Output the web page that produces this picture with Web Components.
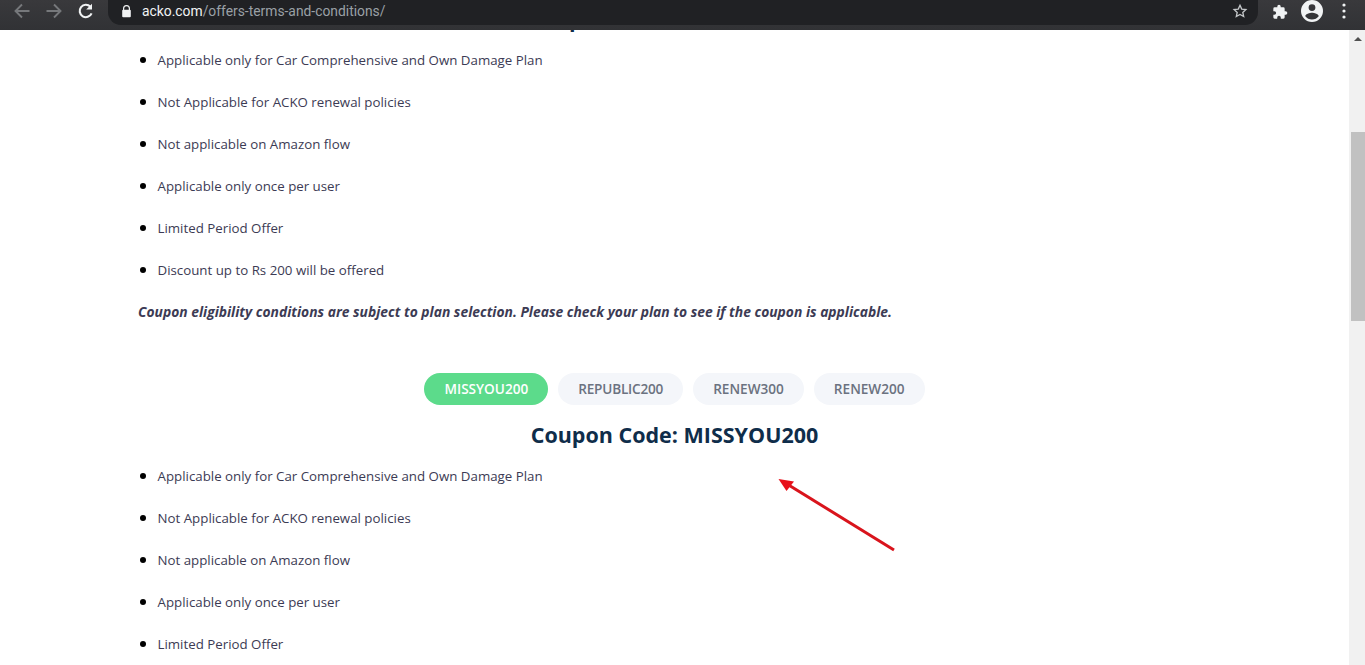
<!DOCTYPE html>
<html>
<head>
<meta charset="utf-8">
<title>ACKO offers</title>
<style>
  html, body { margin: 0; height: 100%; overflow: hidden; background: #fff; }
  body { display: flex; flex-direction: column; height: 665px; font-family: "Open Sans", sans-serif; }
</style>
</head>
<body>
<browser-bar url-host="acko.com" url-path="/offers-terms-and-conditions/"></browser-bar>
<page-view>
  <coupon-section code="REPUBLIC200"></coupon-section>
  <coupon-section code="MISSYOU200" tabs limit="5"></coupon-section>
</page-view>

<script>
const TERMS = [
    'Applicable only for Car Comprehensive and Own Damage Plan',
    'Not Applicable for ACKO renewal policies',
    'Not applicable on Amazon flow',
    'Applicable only once per user',
    'Limited Period Offer',
    'Discount up to Rs 200 will be offered',
];
const NOTE = 'Coupon eligibility conditions are subject to plan selection. Please check your plan to see if the coupon is applicable.';
const CODES = ['MISSYOU200', 'REPUBLIC200', 'RENEW300', 'RENEW200'];

class BrowserBar extends HTMLElement {
    constructor() {
        super();
        this.attachShadow({ mode: 'open' });
    }

    connectedCallback() {
        this.shadowRoot.innerHTML = `<style>
        :host {
            display: flex;
            align-items: flex-start;
            flex: none;
            height: 30px;
            box-sizing: border-box;
            background: linear-gradient(#39393c, #313235);
            overflow: hidden;
        }
        svg { display: block; flex: none; }
        .nav { display: flex; align-items: center; gap: 14px; padding: 2px 0 0 13px; }
        .omni {
            display: flex;
            align-items: center;
            flex: none;
            box-sizing: border-box;
            width: 1150px;
            height: 25px;
            margin-left: 13px;
            padding: 0 10px 3px 13px;
            background: #202124;
            border-radius: 0 0 13px 13px;
            font: 13.850px/22px "Roboto", "Liberation Sans", sans-serif;
            color: #9aa0a6;
        }
        .omni b { font-weight: 400; color: #f1f3f4; }
        .omni span { margin-left: 10px; flex: 1; white-space: nowrap; }
        .right { display: flex; align-items: center; padding: 0 0 0 14px; }
        .ext { margin-top: 1px; }
        .avatar { margin-left: 13px; }
        .dots { margin-left: 19px; }
        </style>
        <div class="nav">
            <svg width="18" height="18" viewBox="0 0 18 18" fill="none" stroke="#76787b" stroke-width="1.900"><path d="M16.500 9H2.500M9 2.500 2.500 9 9 15.500"/></svg>
            <svg width="18" height="18" viewBox="0 0 18 18" fill="none" stroke="#76787b" stroke-width="1.900"><path d="M1.500 9h14M9 2.500 15.500 9 9 15.500"/></svg>
            <svg width="18" height="18" viewBox="0 0 18 18" fill="none" stroke="#f1f3f4" stroke-width="2.100"><path d="M14.600 11.400A6.200 6.200 0 1 1 13.400 4.700"/><path d="M15 1.800v5.800H9.200z" fill="#f1f3f4" stroke="none"/></svg>
        </div>
        <div class="omni">
            <svg width="11" height="13" viewBox="0 0 11 13"><path d="M2.600 5V3.600a2.900 2.900 0 0 1 5.800 0V5" fill="none" stroke="#f1f3f4" stroke-width="1.200"/><rect x="1.200" y="4.800" width="8.600" height="7.400" rx="1" fill="#f1f3f4"/></svg>
            <span><b>${this.getAttribute('url-host')}</b>${this.getAttribute('url-path')}</span>
            <svg width="16" height="16" viewBox="0 0 24 24" fill="none" stroke="#c4c7c9" stroke-width="2"><path d="M12 3.500l2.600 5.700 6.200.7-4.600 4.200 1.300 6.100L12 17.200l-5.500 3 1.300-6.100-4.600-4.200 6.200-.7z"/></svg>
        </div>
        <div class="right">
            <svg class="ext" width="16" height="16" viewBox="0 0 24 24" fill="#f1f3f4"><path d="M20.500 11H19V7a2 2 0 0 0-2-2h-4V3.500a2.500 2.500 0 0 0-5 0V5H4a2 2 0 0 0-2 2v3.800h1.500a2.700 2.700 0 0 1 0 5.400H2V20a2 2 0 0 0 2 2h3.800v-1.500a2.700 2.700 0 0 1 5.400 0V22H17a2 2 0 0 0 2-2v-4h1.500a2.500 2.500 0 0 0 0-5z"/></svg>
            <svg class="avatar" width="22" height="22" viewBox="0 0 22 22" fill="#f1f3f4"><path fill-rule="evenodd" d="M11 0a11 11 0 1 1 0 22 11 11 0 0 1 0-22zm0 4.200a3.400 3.400 0 1 0 0 6.800 3.400 3.400 0 0 0 0-6.800zM4.300 16.200c1.400 2 4 3.300 6.700 3.300s5.300-1.300 6.700-3.300c-.1-2.200-4.500-3.400-6.700-3.400s-6.600 1.200-6.700 3.400z"/></svg>
            <svg class="dots" width="4" height="16" viewBox="0 0 4 16" fill="#f1f3f4"><circle cx="2" cy="2" r="1.600"/><circle cx="2" cy="8" r="1.600"/><circle cx="2" cy="14" r="1.600"/></svg>
        </div>`;
    }
}

class PageView extends HTMLElement {
    constructor() {
        super();
        this.attachShadow({ mode: 'open' });
        this.shadowRoot.innerHTML = `<style>
        :host { display: flex; flex: 1; min-height: 0; position: relative; overflow: hidden; }
        .content { flex: 1; min-width: 0; padding: 0 138px; margin-top: -27px; }
        .arrow { position: absolute; left: 770px; top: 440px; }
        </style>
        <div class="content"><slot></slot></div>
        <page-scrollbar></page-scrollbar>
        <svg class="arrow" width="130" height="90" viewBox="770 470 130 90">
            <path d="M894 550 787 484" stroke="#d9141c" stroke-width="3" fill="none"/>
            <path d="M778.500 479 794 481.500 786.500 491z" fill="#e8101a"/>
        </svg>`;
    }
}

class PageScrollbar extends HTMLElement {
    constructor() {
        super();
        this.attachShadow({ mode: 'open' });
        this.shadowRoot.innerHTML = `<style>
        :host { display: flex; flex-direction: column; flex: none; width: 16px; background: #f1f1f1; }
        .up { display: flex; justify-content: center; align-items: center; height: 17px; }
        .up i { width: 0; height: 0; border: 4px solid transparent; border-top: 0; border-bottom: 4px solid #505050; margin-left: 2px; }
        .thumb { height: 189px; margin: 85px 0 0 2px; background: #c1c1c1; }
        </style>
        <div class="up"><i></i></div>
        <div class="thumb"></div>`;
    }
}

class TabPill extends HTMLElement {
    constructor() {
        super();
        this.attachShadow({ mode: 'open' });
        this.shadowRoot.innerHTML = `<style>
        :host {
            display: block;
            padding: 0 20px;
            border-radius: 16px;
            background: #f4f6fa;
            color: #6b7280;
            font: 600 13.600px/32px "Open Sans", sans-serif;
        }
        :host([active]) { background: #5cdb8b; color: #fff; }
        </style><slot></slot>`;
    }
}

class CouponSection extends HTMLElement {
    constructor() {
        super();
        this.attachShadow({ mode: 'open' });
    }

    connectedCallback() {
        const code = this.getAttribute('code');
        const limit = Number(this.getAttribute('limit')) || TERMS.length;
        const tabs = !this.hasAttribute('tabs') ? '' : `<div class="tabs">${
            CODES.map(c => `<tab-pill ${c === code ? 'active' : ''} ${c === 'REPUBLIC200' ? 'style="letter-spacing:-.2px"' : ''}>${c}</tab-pill>`).join('')
        }</div>`;
        this.shadowRoot.innerHTML = `<style>
        :host { display: block; color: #3c3b54; }
        .tabs { display: flex; justify-content: center; gap: 10px; margin-bottom: 14px; }
        h2 { margin: 0; text-align: center; font: 700 21.500px/32px "Open Sans", sans-serif; color: #0f2d4a; }
        ul { margin: 0; padding: 0 0 0 19.500px; }
        li { font-size: 13.300px; line-height: 22px; height: 22px; margin-top: 20px; }
        li::marker { color: #000; font-size: 16px; }
        li:first-child { margin-top: 13px; }
        p { margin: 21px 0 0; font: italic 700 13.850px/22px "Open Sans", sans-serif; }
        .gap { height: 50px; }
        </style>
        ${tabs}
        <h2>Coupon Code: ${code}</h2>
        <ul>${TERMS.slice(0, limit).map(t => `<li>${t}</li>`).join('')}</ul>
        ${limit === TERMS.length ? `<p>${NOTE}</p><div class="gap"></div>` : ''}`;
    }
}

customElements.define('browser-bar', BrowserBar);
customElements.define('page-scrollbar', PageScrollbar);
customElements.define('page-view', PageView);
customElements.define('tab-pill', TabPill);
customElements.define('coupon-section', CouponSection);
</script>
</body>
</html>
